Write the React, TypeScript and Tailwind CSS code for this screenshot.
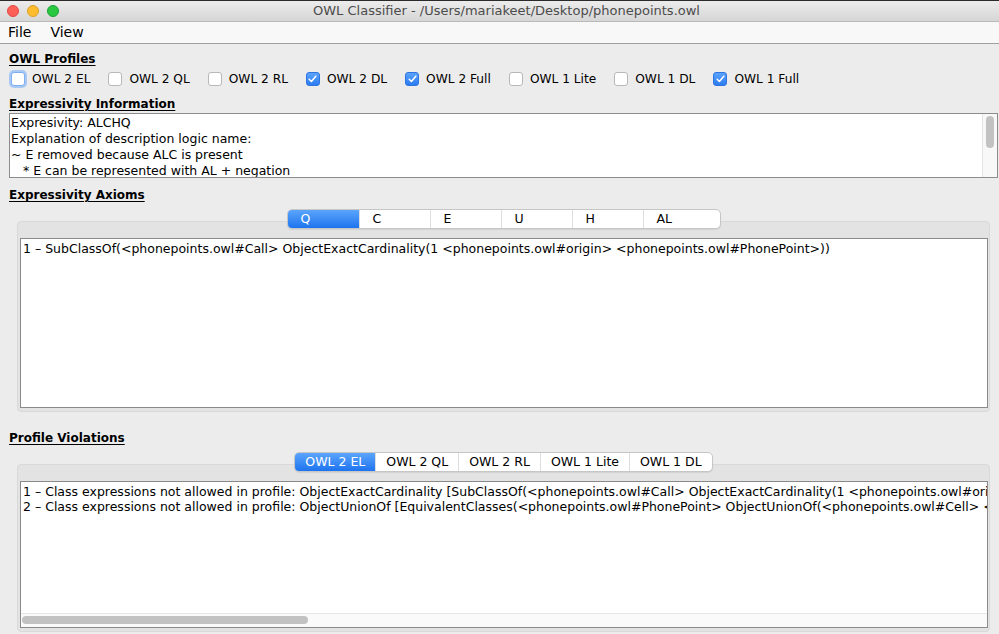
const profiles = [
  { label: "OWL 2 EL", checked: false, focus: true },
  { label: "OWL 2 QL", checked: false },
  { label: "OWL 2 RL", checked: false },
  { label: "OWL 2 DL", checked: true },
  { label: "OWL 2 Full", checked: true },
  { label: "OWL 1 Lite", checked: false },
  { label: "OWL 1 DL", checked: false },
  { label: "OWL 1 Full", checked: true },
];

const axiomTabs = ["Q", "C", "E", "U", "H", "AL"];
const violationTabs = ["OWL 2 EL", "OWL 2 QL", "OWL 2 RL", "OWL 1 Lite", "OWL 1 DL"];

function Checkbox({ checked, focus }: { checked: boolean; focus?: boolean }) {
  if (checked) {
    return (
      <span className="flex h-[14px] w-[14px] items-center justify-center rounded-[3px] bg-gradient-to-b from-[#5aa3fa] to-[#2b7cf2] border border-[#2f74e0]">
        <svg width="9" height="8" viewBox="0 0 9 8">
          <path d="M1.2 4.3 L3.4 6.5 L7.8 1.2" fill="none" stroke="white" strokeWidth="1.5" strokeLinecap="round" strokeLinejoin="round" />
        </svg>
      </span>
    );
  }
  return (
    <span
      className={[
        "block h-[14px] w-[14px] rounded-[3px] border bg-white",
        focus ? "border-[#7eaef0] shadow-[0_0_0_2px_#a9c9f5]" : "border-[#b8b8b8]",
      ].join(" ")}
    />
  );
}

function Heading({ children }: { children: string }) {
  return (
    <div className="h-[16px] text-[12px] font-bold leading-[16px] text-black underline underline-offset-2">
      {children}
    </div>
  );
}

export default function App() {
  return (
    <div
      className="flex h-[634px] w-[999px] flex-col overflow-hidden bg-[#ececec] text-black"
      style={{ fontFamily: '"Lucida Grande", "DejaVu Sans", sans-serif' }}
    >
      {/* title bar */}
      <div className="relative flex h-[22px] shrink-0 items-center border-b border-[#b9b9b9] border-t border-t-[#2a2a2a] bg-gradient-to-b from-[#ececec] to-[#d6d6d6]">
        <div className="flex items-center gap-[8px] pl-[7px]">
          <span className="h-[12px] w-[12px] rounded-full border border-[#de4a43] bg-[#fe5f57]" />
          <span className="h-[12px] w-[12px] rounded-full border border-[#dea02a] bg-[#febc2e]" />
          <span className="h-[12px] w-[12px] rounded-full border border-[#1ea035] bg-[#28c840]" />
        </div>
        <div className="absolute inset-x-0 pl-[14px] text-center text-[13px] leading-[20px] text-[#4c4c4c]">
          OWL Classifier - /Users/mariakeet/Desktop/phonepoints.owl
        </div>
      </div>

      {/* menu bar */}
      <div className="flex h-[22px] shrink-0 items-center gap-[19px] border-b border-[#a0a0a0] bg-[#f8f8f8] pl-[8px] text-[14px]">
        <span>File</span>
        <span>View</span>
      </div>

      <div className="flex flex-1 flex-col pl-[9px] pr-[1px]">
        <div className="mt-[7px]">
          <Heading>OWL Profiles</Heading>
        </div>

        <div className="mt-[2px] flex h-[20px] items-center gap-[18px] pl-[2px] text-[12.2px]">
          {profiles.map((p) => (
            <label key={p.label} className="flex items-center gap-[7px]">
              <Checkbox checked={p.checked} focus={p.focus} />
              <span>{p.label}</span>
            </label>
          ))}
        </div>

        <div className="mt-[7px]">
          <Heading>Expressivity Information</Heading>
        </div>

        <div className="mt-[1px] flex h-[65px] border border-[#8c8c8c] bg-white">
          <div className="flex-1 overflow-hidden whitespace-pre pl-[1px] pt-[1px] text-[12.5px] leading-[16px]">
            {"Expresivity: ALCHQ\nExplanation of description logic name:\n~ E removed because ALC is present\n   * E can be represented with AL + negation"}
          </div>
          <div className="w-[15px] border-l border-[#e4e4e4] bg-[#f8f8f8] px-[3px] pt-[2px]">
            <div className="h-[32px] w-[8px] rounded-full bg-[#c2c2c2]" />
          </div>
        </div>

        <div className="mt-[9px]">
          <Heading>Expressivity Axioms</Heading>
        </div>

        {/* axioms tabbed pane */}
        <div className="mt-[6px] flex flex-col pl-[8px] pr-[8px]">
          <div className="relative z-10 flex justify-center">
            <div className="flex h-[20px] overflow-hidden rounded-[5px] border border-[#c6c6c6] bg-white text-[12.5px] shadow-[0_1px_1px_rgba(0,0,0,0.08)]">
              {axiomTabs.map((t, i) => (
                <div
                  key={t}
                  className={[
                    "flex items-center pl-[13px] leading-[18px]",
                    i === axiomTabs.length - 1 ? "w-[77px]" : "w-[71px]",
                    i > 0 ? "border-l border-[#dedede]" : "",
                    i === 0 ? "bg-gradient-to-b from-[#5aa4fb] to-[#1c74ef] text-white" : "",
                  ].join(" ")}
                >
                  {t}
                </div>
              ))}
            </div>
          </div>
          <div className="-mt-[8px] h-[191px] rounded-[4px] border border-[#d9d9d9] bg-[#e3e3e3] pb-[3px] pl-[2px] pr-[1px] pt-[16px]">
            <div className="h-full overflow-hidden whitespace-nowrap border border-[#8a8a8a] bg-white pl-[2px] pt-[2px] text-[12.5px] leading-[15px]">
              1 – SubClassOf(&lt;phonepoints.owl#Call&gt; ObjectExactCardinality(1 &lt;phonepoints.owl#origin&gt; &lt;phonepoints.owl#PhonePoint&gt;))
            </div>
          </div>
        </div>

        <div className="mt-[18px]">
          <Heading>Profile Violations</Heading>
        </div>

        {/* violations tabbed pane */}
        <div className="mt-[6px] flex flex-col pl-[8px] pr-[8px]">
          <div className="relative z-10 flex justify-center">
            <div className="flex h-[20px] overflow-hidden rounded-[5px] border border-[#c6c6c6] bg-white text-[12.5px] shadow-[0_1px_1px_rgba(0,0,0,0.08)]">
              {violationTabs.map((t, i) => (
                <div
                  key={t}
                  className={[
                    "flex items-center px-[10px] leading-[18px]",
                    i > 0 ? "border-l border-[#dedede]" : "",
                    i === 0 ? "bg-gradient-to-b from-[#5aa4fb] to-[#1c74ef] text-white" : "",
                  ].join(" ")}
                >
                  {t}
                </div>
              ))}
            </div>
          </div>
          <div className="-mt-[8px] h-[168px] rounded-[4px] border border-[#d9d9d9] bg-[#e3e3e3] pb-[3px] pl-[2px] pr-[1px] pt-[16px]">
            <div className="flex h-full flex-col border border-[#8a8a8a] bg-white">
              <div className="flex-1 overflow-hidden whitespace-nowrap pl-[2px] pt-[2px] text-[12.5px] leading-[15px]">
                <div>
                  1 – Class expressions not allowed in profile: ObjectExactCardinality [SubClassOf(&lt;phonepoints.owl#Call&gt; ObjectExactCardinality(1 &lt;phonepoints.owl#origin&gt; &lt;phonepoints.owl#PhonePoint&gt;))]
                </div>
                <div>
                  2 – Class expressions not allowed in profile: ObjectUnionOf [EquivalentClasses(&lt;phonepoints.owl#PhonePoint&gt; ObjectUnionOf(&lt;phonepoints.owl#Cell&gt; &lt;phonepoints.owl#Landline&gt;))]
                </div>
              </div>
              <div className="h-[14px] border-t border-[#e6e6e6] bg-[#fafafa] px-[1px] pt-[2px]">
                <div className="h-[8px] w-[286px] rounded-full bg-[#c2c2c2]" />
              </div>
            </div>
          </div>
        </div>
      </div>
    </div>
  );
}
